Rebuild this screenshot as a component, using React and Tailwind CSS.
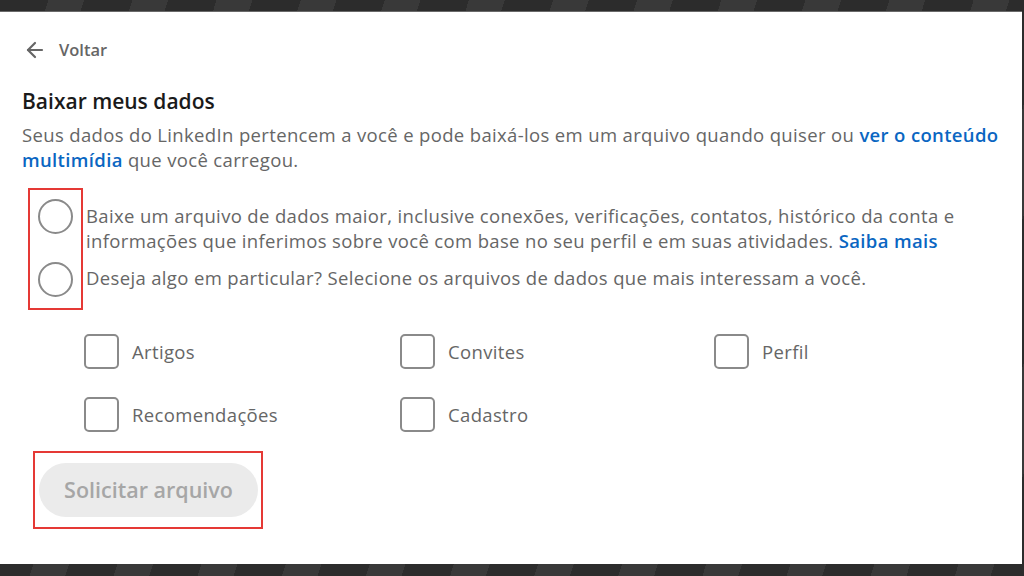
import { ArrowLeft } from "lucide-react";

const font = { fontFamily: '"Open Sans", "Noto Sans", sans-serif' };

const checkboxes = [
  ["Artigos", "Convites", "Perfil"],
  ["Recomendações", "Cadastro"],
];

function Radio() {
  return <span className="block h-[35px] w-[35px] rounded-full border-2 border-[#8a8a8a]" />;
}

function Checkbox({ label }) {
  return (
    <label className="flex items-center gap-[13px]">
      <span className="block h-[35px] w-[35px] rounded-[5px] border-2 border-[#8a8a8a]" />
      <span className="text-[18.5px] leading-[25px] tracking-[0.35px] text-[#666666]">{label}</span>
    </label>
  );
}

export default function App() {
  return (
    <div
      className="flex h-[576px] w-[1024px] flex-col overflow-hidden bg-[repeating-linear-gradient(108deg,#2c2c2c_0px,#2c2c2c_46px,#393939_46px,#393939_80px)]"
      style={font}
    >
      <div className="h-[11px] shrink-0" />
      <main className="h-[553px] w-[1022px] shrink-0 border-t border-[#6a6a6a] bg-white pl-[22px]">
        <a className="ml-[1px] mt-[26px] flex items-center gap-[12px] text-[16.5px] font-semibold text-[#666666]">
          <ArrowLeft size={24} strokeWidth={2.2} className="text-[#666666]" />
          <span>Voltar</span>
        </a>

        <h1 className="mt-[24px] text-[21px] font-semibold leading-[28px] text-[#1a1a1a]">
          Baixar meus dados
        </h1>
        <p className="mt-[7px] text-[18.5px] leading-[25px] tracking-[0.35px] text-[#666666]">
          Seus dados do LinkedIn pertencem a você e pode baixá-los em um arquivo quando quiser ou{" "}
          <span className="font-semibold text-[#0a66c2]">ver o conteúdo</span>
          <br />
          <span className="font-semibold text-[#0a66c2]">multimídia</span> que você carregou.
        </p>

        <div className="mt-[16px] flex items-start">
          <div className="ml-[6px] flex w-[55px] flex-col items-center gap-[28px] border-2 border-[#e53935] pt-[9px] pb-[11px]">
            <Radio />
            <Radio />
          </div>
          <div className="ml-[3px] mt-[15px] flex flex-col gap-[12px] text-[18.5px] leading-[25px] tracking-[0.35px] text-[#666666]">
            <p>
              Baixe um arquivo de dados maior, inclusive conexões, verificações, contatos, histórico da conta e
              <br />
              informações que inferimos sobre você com base no seu perfil e em suas atividades.{" "}
              <span className="font-semibold text-[#0a66c2]">Saiba mais</span>
            </p>
            <p>Deseja algo em particular? Selecione os arquivos de dados que mais interessam a você.</p>
          </div>
        </div>

        <div className="ml-[62px] mt-[24px] flex flex-col gap-[28px]">
          {checkboxes.map((row, i) => (
            <div key={i} className="grid grid-cols-[316px_314px_auto]">
              {row.map((label) => (
                <Checkbox key={label} label={label} />
              ))}
            </div>
          ))}
        </div>

        <div className="ml-[11px] mt-[19px] inline-block border-2 border-[#e53935] pt-[10px] pb-[10px] pl-[4px] pr-[3px]">
          <button className="h-[54px] w-[219px] rounded-full bg-[#ebebeb] text-[21.5px] font-semibold text-[#a6a6a6]">
            Solicitar arquivo
          </button>
        </div>
      </main>
    </div>
  );
}
